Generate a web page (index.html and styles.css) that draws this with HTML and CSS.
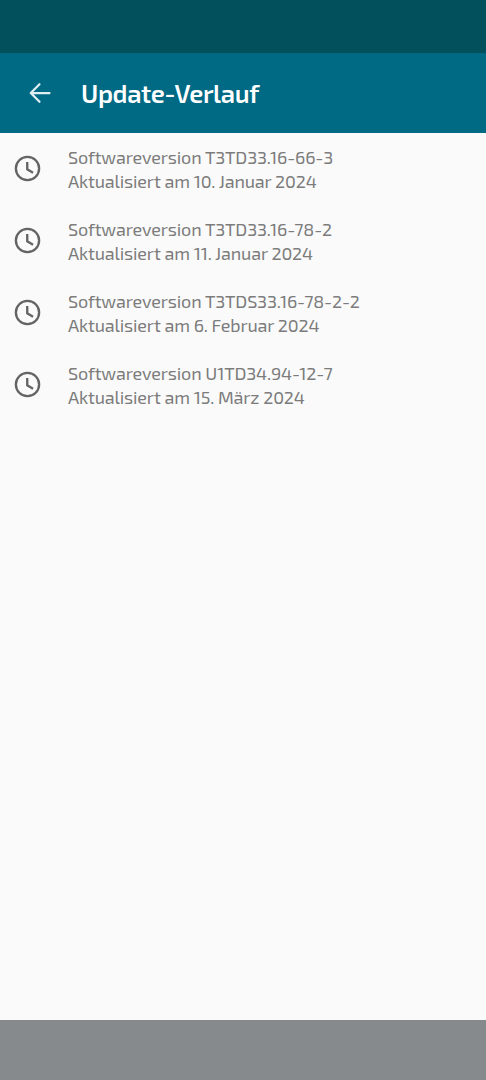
FILE: index.html
```html
<!DOCTYPE html>
<html lang="de">
	<head>
		<meta charset="utf-8">
		<title>Update-Verlauf</title>
		<link rel="stylesheet" href="styles.css">
	</head>
	<body>
		<svg class="defs" width="0" height="0">
			<symbol id="clock" viewBox="0 0 24 24">
				<circle cx="12" cy="12" r="9"/>
				<path d="M11.8 7v5.6l4.5 2.6"/>
			</symbol>
		</svg>
		<div class="statusbar"></div>
		<header>
			<svg class="back" viewBox="0 0 24 24"><path d="M19.6 12H4.6M11.6 5L4.6 12l7 7"/></svg>
			<h1>Update-Verlauf</h1>
		</header>
		<main>
			<div class="entry">
				<svg class="clock"><use href="#clock"/></svg>
				<div class="text">
					<p class="version">Softwareversion T3TD33.16-66-3</p>
					<p class="date">Aktualisiert am 10. Januar 2024</p>
				</div>
			</div>
			<div class="entry">
				<svg class="clock"><use href="#clock"/></svg>
				<div class="text">
					<p class="version">Softwareversion T3TD33.16-78-2</p>
					<p class="date">Aktualisiert am 11. Januar 2024</p>
				</div>
			</div>
			<div class="entry">
				<svg class="clock"><use href="#clock"/></svg>
				<div class="text">
					<p class="version">Softwareversion T3TDS33.16-78-2-2</p>
					<p class="date">Aktualisiert am 6. Februar 2024</p>
				</div>
			</div>
			<div class="entry">
				<svg class="clock"><use href="#clock"/></svg>
				<div class="text">
					<p class="version">Softwareversion U1TD34.94-12-7</p>
					<p class="date">Aktualisiert am 15. März 2024</p>
				</div>
			</div>
		</main>
		<footer></footer>
	</body>
</html>
```

FILE: styles.css
```css
body {
	margin: 0;
	height: 1080px;
	display: flex;
	flex-direction: column;
	background: #fafafa;
	font-family: "Exo 2", Roboto, sans-serif;
}
.defs {
	position: absolute;
}
.statusbar {
	height: 53px;
	background: #02505c;
}
header {
	height: 80px;
	display: flex;
	align-items: center;
	background: #006a85;
	color: #fff;
}
.back {
	width: 30px;
	height: 30px;
	margin-left: 25px;
	fill: none;
	stroke: #e0eef1;
	stroke-width: 1.8;
	stroke-linecap: round;
	stroke-linejoin: round;
}
h1 {
	margin: 0 0 0 26px;
	font-size: 25.5px;
	font-weight: 600;
	letter-spacing: -0.38px;
}
main {
	flex: 1;
}
.entry {
	height: 72px;
	display: flex;
	align-items: center;
}
.clock {
	width: 31px;
	height: 31px;
	margin: -1px 25px 0 12px;
	fill: none;
	stroke: #646464;
	stroke-width: 1.8;
}
.clock path {
	stroke-width: 1.4;
}
.text {
	padding-top: 1px;
}
p {
	margin: 0;
	font-size: 18px;
	font-weight: 370;
	line-height: 23.5px;
	white-space: nowrap;
	color: #7c7c7c;
	letter-spacing: -0.16px;
}
footer {
	height: 60px;
	background: #868a8c;
}
```
